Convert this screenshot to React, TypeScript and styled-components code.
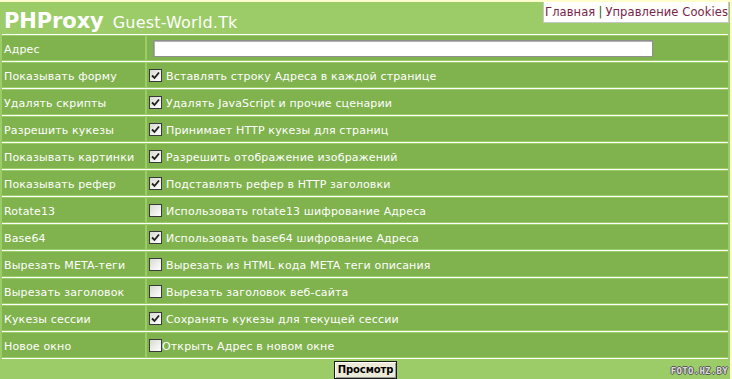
import React from "react";
import styled, { createGlobalStyle } from "styled-components";

const Global = createGlobalStyle`
  html, body { margin: 0; padding: 0; }
  body {
    background: #ffffcc;
    font-family: "DejaVu Sans", Verdana, sans-serif;
    overflow: hidden;
  }
`;

const Page = styled.div`
  position: relative;
  margin: 2px 2px 0 0;
  width: 730px;
  height: 377px;
  background: #9ccc68;
  display: flex;
  flex-direction: column;
`;

const Header = styled.div`
  display: flex;
  justify-content: space-between;
  align-items: flex-start;
  height: 32px;
`;

const Title = styled.div`
  display: flex;
  align-items: baseline;
  padding: 7px 0 0 4px;
  color: #ffffff;
`;

const Brand = styled.span`
  font-size: 21px;
  font-weight: bold;
  letter-spacing: -0.1px;
`;

const Site = styled.span`
  font-size: 16px;
  margin-left: 9px;
  letter-spacing: 0.2px;
`;

const NavBox = styled.div`
  background: #ffffff;
  border: 1px solid #c8c8c8;
  border-top: none;
  height: 20px;
  padding: 0 0 0 1px;
  display: flex;
  align-items: center;
  font-size: 11.5px;
  letter-spacing: 0.1px;
  color: #336600;
  margin-right: 1px;
`;

const NavLink = styled.a`
  color: #7a2446;
  text-decoration: none;
`;

const Sep = styled.span`
  margin: 0 3px;
`;

const Table = styled.div`
  margin: 0 2px;
  border-bottom: 1px solid #ffffff;
  display: flex;
  flex-direction: column;
`;

const Row = styled.div`
  border-top: 1px solid #ffffff;
  padding: 1px 0;
  display: grid;
  grid-template-columns: 143px 1fr;
  column-gap: 2px;
`;

const Cell = styled.div`
  background: #80b24e;
  height: 24px;
  box-sizing: border-box;
  padding-top: 2px;
  display: flex;
  align-items: center;
  color: #ffffff;
  font-size: 11px;
  letter-spacing: 0.15px;
  white-space: nowrap;
`;

const Label = styled(Cell)`
  padding-left: 2px;
`;

const Value = styled(Cell)<{ $tight?: boolean }>`
  padding-left: 2px;
  gap: ${(p) => (p.$tight ? "0" : "4px")};
`;

const TextInput = styled.div`
  margin-left: 4px;
  margin-top: -2px;
  width: 498px;
  height: 15px;
  background: #ffffff;
  border: 1px solid #8e8e8e;
  box-shadow: inset 1px 1px 0 #b0b0b0;
`;

const Box = styled.span`
  width: 11px;
  height: 11px;
  margin-top: -1px;
  border: 1px solid #3a3a3a;
  background: linear-gradient(135deg, #d8d8d4 0%, #f4f4f2 70%, #ffffff 100%);
  display: flex;
  align-items: center;
  justify-content: center;
  flex: none;
`;

const Footer = styled.div`
  display: flex;
  justify-content: center;
  padding-top: 2px;
`;

const Button = styled.button`
  height: 18px;
  padding: 0 3px;
  font-family: "DejaVu Sans", Verdana, sans-serif;
  font-size: 10px;
  font-weight: bold;
  letter-spacing: -0.1px;
  color: #000000;
  background: #ece9d8;
  border: 1px solid #1a1a1a;
  box-shadow: inset 1px 1px 0 #ffffff, inset -1px -1px 0 #9a9a9a;
  line-height: 14px;
  margin-left: 1px;
`;

const Watermark = styled.span`
  position: absolute;
  right: 2px;
  bottom: 3px;
  font-family: "DejaVu Sans Mono", monospace;
  font-size: 9px;
  font-weight: bold;
  letter-spacing: 0.3px;
  color: #dcdcdc;
  text-shadow: 1px 0 0 #5a5a5a, -1px 0 0 #5a5a5a, 0 1px 0 #5a5a5a, 0 -1px 0 #5a5a5a;
`;

const Check = ({ on }: { on: boolean }) => (
  <Box>
    {on && (
      <svg width="9" height="9" viewBox="0 0 9 9">
        <path d="M1 4.5 L3.5 7 L8 1.5" fill="none" stroke="#1e1e1e" strokeWidth="1.8" />
      </svg>
    )}
  </Box>
);

const rows: { label: string; text: string; on: boolean; tight?: boolean }[] = [
  { label: "Показывать форму", text: "Вставлять строку Адреса в каждой странице", on: true },
  { label: "Удалять скрипты", text: "Удалять JavaScript и прочие сценарии", on: true },
  { label: "Разрешить кукезы", text: "Принимает HTTP кукезы для страниц", on: true },
  { label: "Показывать картинки", text: "Разрешить отображение изображений", on: true },
  { label: "Показывать рефер", text: "Подставлять рефер в HTTP заголовки", on: true },
  { label: "Rotate13", text: "Использовать rotate13 шифрование Адреса", on: false },
  { label: "Base64", text: "Использовать base64 шифрование Адреса", on: true },
  { label: "Вырезать META-теги", text: "Вырезать из HTML кода META теги описания", on: false },
  { label: "Вырезать заголовок", text: "Вырезать заголовок веб-сайта", on: false },
  { label: "Кукезы сессии", text: "Сохранять кукезы для текущей сессии", on: true },
  { label: "Новое окно", text: "Открыть Адрес в новом окне", on: false, tight: true },
];

export default function App() {
  return (
    <>
      <Global />
      <Page>
        <Header>
          <Title>
            <Brand>PHProxy</Brand>
            <Site>Guest-World.Tk</Site>
          </Title>
          <NavBox>
            <NavLink href="#">Главная</NavLink>
            <Sep>|</Sep>
            <NavLink href="#">Управление Cookies</NavLink>
          </NavBox>
        </Header>
        <Table>
          <Row>
            <Label>Адрес</Label>
            <Value>
              <TextInput />
            </Value>
          </Row>
          {rows.map((r) => (
            <Row key={r.label}>
              <Label>{r.label}</Label>
              <Value $tight={r.tight}>
                <Check on={r.on} />
                <span>{r.text}</span>
              </Value>
            </Row>
          ))}
        </Table>
        <Footer>
          <Button>Просмотр</Button>
        </Footer>
        <Watermark>FOTO.HZ.BY</Watermark>
      </Page>
    </>
  );
}
